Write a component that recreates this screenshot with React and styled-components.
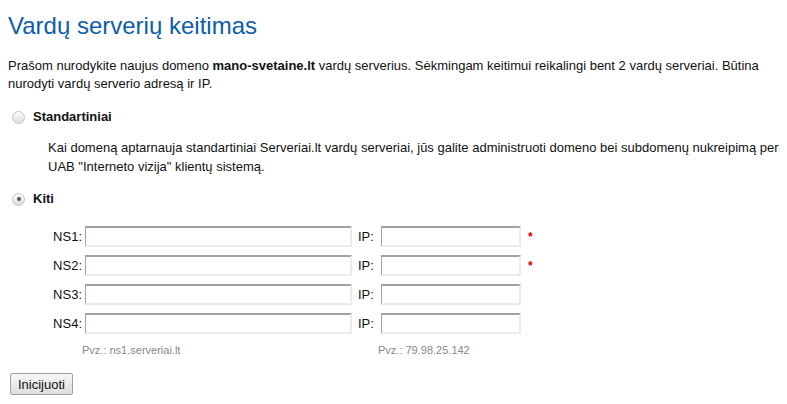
import React from 'react';
import styled, { createGlobalStyle } from 'styled-components';

const GlobalStyle = createGlobalStyle`
  body {
    margin: 0;
    background: #fff;
    font-family: "Liberation Sans", Arial, sans-serif;
    font-size: 13px;
    color: #111;
  }
`;

const Page = styled.div`
  padding: 0 8px;
`;

const Title = styled.h1`
  margin: 10px 0 0 0;
  font-size: 24px;
  font-weight: normal;
  line-height: 32px;
  color: #0b5ea8;
`;

const Intro = styled.p`
  margin: 15px 0 0 0;
  line-height: 18px;
`;

const Option = styled.label`
  display: flex;
  align-items: center;
  gap: 8px;
  margin: ${(p) => p.$top}px 0 0 4px;
  font-weight: bold;
  line-height: 18px;
  cursor: pointer;
`;

const Radio = styled.span`
  position: relative;
  width: 13px;
  height: 13px;
  border-radius: 50%;
  border: 1px solid #c4c4c4;
  background: linear-gradient(#fdfdfd, #dcdcdc);
  box-sizing: border-box;
  &::after {
    content: '';
    display: ${(p) => (p.$checked ? 'block' : 'none')};
    position: absolute;
    left: 3.5px;
    top: 3.5px;
    width: 4px;
    height: 4px;
    border-radius: 50%;
    background: #555;
  }
`;

const OptionText = styled.p`
  margin: ${(p) => p.$top}px 0 0 40px;
  line-height: 19px;
`;

const Fields = styled.div`
  display: grid;
  grid-template-columns: 77px 267px 29px 140px 20px;
  row-gap: 8px;
  align-items: center;
  margin-top: 18px;
`;

const FieldLabel = styled.span`
  padding-right: 3px;
  padding-left: ${(p) => (p.$ip ? '6px' : '0')};
  text-align: ${(p) => (p.$ip ? 'left' : 'right')};
`;

const Input = styled.input`
  box-sizing: border-box;
  width: 100%;
  height: 21px;
  margin: 0;
  padding: 0 3px;
  font: inherit;
  background: #fff;
  border-style: solid;
  border-width: 2px 2px 2px 1px;
  border-color: #a2a2a2 #ececec #ececec #a2a2a2;
  outline: none;
`;

const Required = styled.span`
  color: #e00000;
  font-size: 12px;
  font-weight: bold;
  padding-left: 7px;
  line-height: 12px;
`;

const Hint = styled.span`
  grid-column: ${(p) => p.$col};
  font-size: 11px;
  color: #888;
  margin-left: ${(p) => p.$shift || 0}px;
  margin-top: 2px;
`;

const Submit = styled.button`
  display: block;
  margin: 17px 0 0 2px;
  height: 22px;
  padding: 0 7px;
  font: inherit;
  font-size: 13px;
  color: #111;
  border: 1px solid #a0a0a0;
  border-radius: 2px;
  background: linear-gradient(#f7f7f7, #dedede);
`;

const rows = [
  { name: 'NS1', required: true },
  { name: 'NS2', required: true },
  { name: 'NS3', required: false },
  { name: 'NS4', required: false },
];

export default function App() {
  return (
    <Page>
      <GlobalStyle />
      <Title>Vardų serverių keitimas</Title>
      <Intro>
        Prašom nurodykite naujus domeno <b>mano-svetaine.lt</b> vardų serverius.
        Sėkmingam keitimui reikalingi bent 2 vardų serveriai. Būtina nurodyti
        vardų serverio adresą ir IP.
      </Intro>
      <Option $top={15}>
        <Radio />
        Standartiniai
      </Option>
      <OptionText $top={12}>
        Kai domeną aptarnauja standartiniai Serveriai.lt vardų serveriai, jūs
        galite administruoti domeno bei subdomenų nukreipimą per UAB "Interneto
        vizija" klientų sistemą.
      </OptionText>
      <Option $top={14}>
        <Radio $checked />
        Kiti
      </Option>
      <Fields>
        {rows.map((r) => (
          <React.Fragment key={r.name}>
            <FieldLabel>{r.name}:</FieldLabel>
            <Input type="text" />
            <FieldLabel $ip>IP:</FieldLabel>
            <Input type="text" />
            {r.required ? <Required>*</Required> : <span />}
          </React.Fragment>
        ))}
        <Hint $col="2" $shift={-3}>Pvz.: ns1.serveriai.lt</Hint>
        <Hint $col="4 / span 2" $shift={-3}>Pvz.: 79.98.25.142</Hint>
      </Fields>
      <Submit type="button">Inicijuoti</Submit>
    </Page>
  );
}
